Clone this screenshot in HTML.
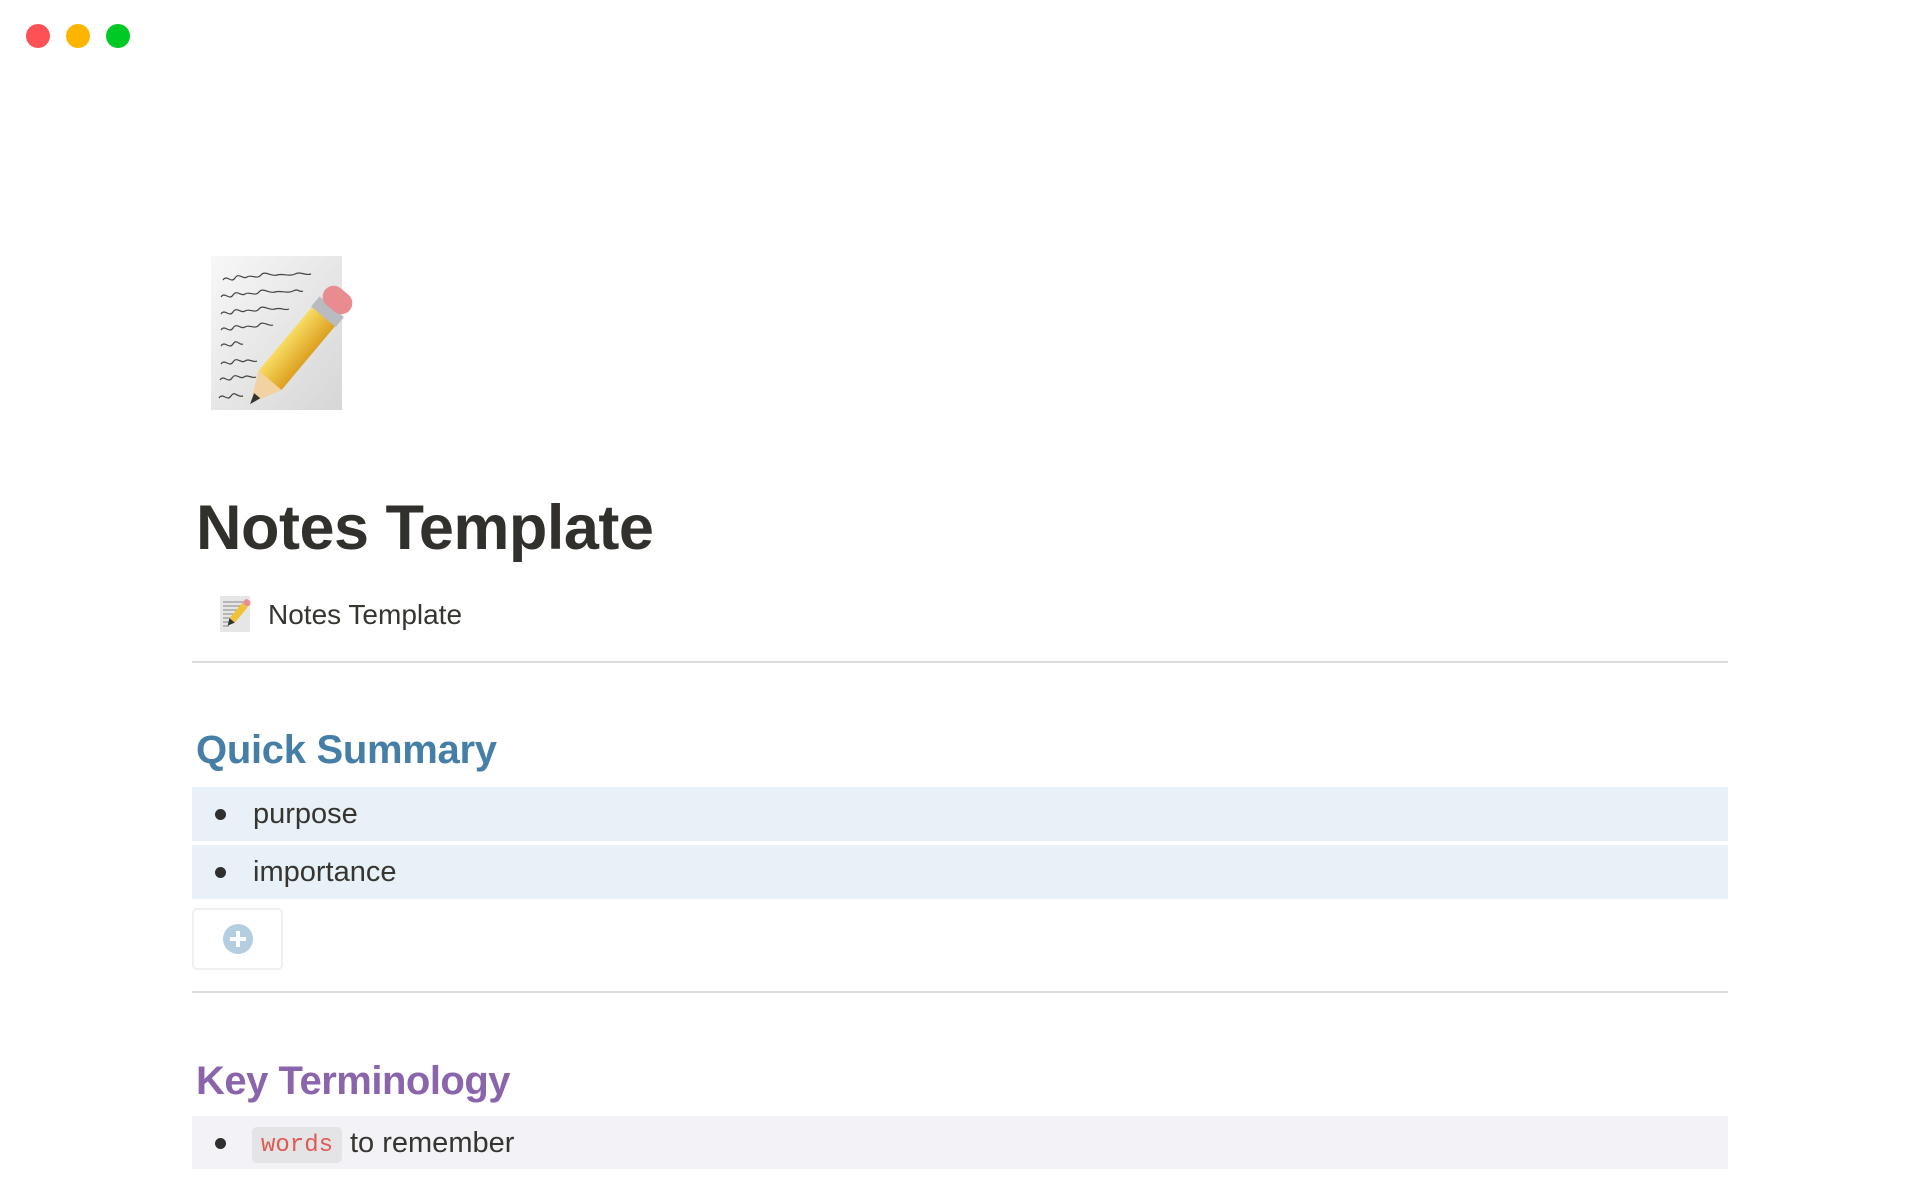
<!DOCTYPE html>
<html><head><meta charset="utf-8"><style>
*{margin:0;padding:0;box-sizing:border-box}
body{width:1920px;height:1200px;background:#fff;position:relative;overflow:hidden;font-family:"Liberation Sans",Arial,sans-serif;color:#37352f}
.a{position:absolute}
.dot{position:absolute;top:24px;width:24px;height:24px;border-radius:50%}
.hr{position:absolute;left:192px;width:1536px;height:2px;background:#dcdcdc}
.row{position:absolute;left:192px;width:1536px;height:54px}
.bul{position:absolute;left:215px;width:11px;height:11px;border-radius:50%;background:#2f2f2f}
.txt{position:absolute;left:253px;font-size:29px;line-height:34px;color:#37352f}
</style></head><body>
<div class="dot" style="left:26px;background:#fe5155"></div>
<div class="dot" style="left:66px;background:#ffb400"></div>
<div class="dot" style="left:106px;background:#00c824"></div>

<svg class="a" style="left:211px;top:256px" width="145" height="160" viewBox="0 0 145 160">
<defs><linearGradient id="pg" x1="0" y1="0" x2="1" y2="1"><stop offset="0" stop-color="#f8f8f8"/><stop offset="1" stop-color="#d6d6d6"/></linearGradient>
<linearGradient id="pc" x1="0" y1="0" x2="1" y2="0"><stop offset="0" stop-color="#f8dc62"/><stop offset="1" stop-color="#dca020"/></linearGradient></defs>
<rect x="0" y="0" width="131" height="154" fill="url(#pg)"/>
<g stroke="#444" stroke-width="1.2" fill="none">
<path d="M12 24 c4 -6 8 4 12 -2 s8 2 12 -1 s10 3 14 -2 s10 2 16 0 s12 2 18 -1 s10 2 16 0"/>
<path d="M10 41 c4 -6 8 4 12 -2 s8 2 12 -1 s10 3 14 -2 s10 2 16 0 s12 2 18 -1 s6 2 10 0"/>
<path d="M10 58 c4 -6 8 4 12 -2 s8 2 12 -1 s10 3 14 -2 s10 2 16 0 s10 2 14 0"/>
<path d="M10 74 c4 -6 8 4 12 -2 s8 2 12 -1 s10 3 14 -2 s10 2 14 0"/>
<path d="M10 90 c4 -6 8 4 12 -2 s6 2 10 0"/>
<path d="M10 108 c4 -6 8 4 12 -2 s8 2 12 -1 s8 2 12 0"/>
<path d="M9 124 c4 -6 8 4 12 -2 s8 2 12 -1 s8 2 12 0"/>
<path d="M8 142 c4 -6 8 4 12 -2 s6 2 12 0"/></g>
<g transform="translate(113 60) rotate(40)">
<rect x="-15" y="0" width="30" height="84" fill="url(#pc)"/>
<rect x="-16" y="-12" width="32" height="13" fill="#b8bcc0"/>
<rect x="-16" y="-32" width="32" height="22" rx="11" fill="#e98c90"/>
<path d="M-15 84 L15 84 L0 114 Z" fill="#f1d2a0"/>
<path d="M-4 104 L4 104 L0 115 Z" fill="#333"/>
</g>
</svg>

<div class="a" style="left:196px;top:490px;font-size:63px;font-weight:bold;line-height:76px;color:#32302c;letter-spacing:-0.5px">Notes Template</div>

<svg class="a" style="left:220px;top:596px" width="32" height="36" viewBox="0 0 32 36">
<rect x="0" y="0" width="30" height="36" fill="#e6e6e6"/>
<g stroke="#666" stroke-width="0.8"><path d="M3 6h22M3 10h18M3 14h16M3 18h12M3 22h8M3 26h8M3 30h6"/></g>
<g transform="translate(25 9) rotate(40)"><rect x="-3.5" y="0" width="7" height="20" fill="#f0c23a"/><rect x="-3.5" y="-6" width="7" height="6" rx="2.5" fill="#e98c90"/><path d="M-3.5 20 L3.5 20 L0 27Z" fill="#333"/></g>
</svg>
<div class="a" style="left:268px;top:598px;font-size:28px;line-height:34px">Notes Template</div>

<div class="hr" style="top:661px"></div>

<div class="a" style="left:196px;top:726px;font-size:40px;font-weight:bold;line-height:48px;color:#457ea7;letter-spacing:-0.3px">Quick Summary</div>
<div class="row" style="top:787px;background:#e8f1f7"></div>
<div class="bul" style="top:809px"></div>
<div class="txt" style="top:797px">purpose</div>
<div class="row" style="top:845px;background:#e8f1f7"></div>
<div class="bul" style="top:867px"></div>
<div class="txt" style="top:855px">importance</div>

<div class="a" style="left:192px;top:908px;width:91px;height:62px;border:2px solid #f0f0f0;border-radius:5px"></div>
<svg class="a" style="left:223px;top:924px" width="30" height="30" viewBox="0 0 30 30"><circle cx="15" cy="15" r="15" fill="#b5cde0"/><path d="M15 7v16M7 15h16" stroke="#fff" stroke-width="4"/></svg>

<div class="hr" style="top:991px"></div>

<div class="a" style="left:196px;top:1057px;font-size:40px;font-weight:bold;line-height:48px;color:#8a65ab;letter-spacing:-0.5px">Key Terminology</div>
<div class="row" style="top:1116px;height:53px;background:#f3f2f7"></div>
<div class="bul" style="top:1138px"></div>
<div class="a" style="left:252px;top:1127px;width:90px;height:36px;background:#e4e3e6;border-radius:5px"></div>
<div class="a" style="left:261px;top:1129px;font-family:'Liberation Mono',monospace;font-size:24px;line-height:34px;color:#df5a53">words</div>
<div class="txt" style="left:350px;top:1126px">to remember</div>
</body></html>
